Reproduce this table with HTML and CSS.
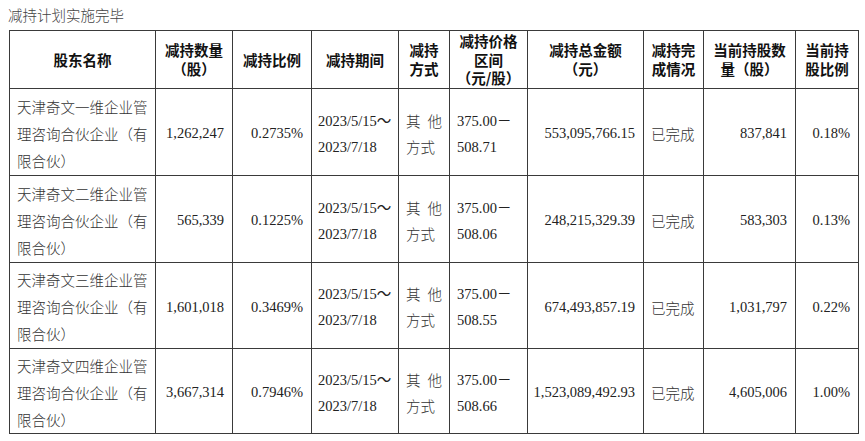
FILE: index.html
```html
<!DOCTYPE html>
<html lang="zh-CN">
<head>
<meta charset="utf-8">
<link rel="stylesheet" href="styles.css">
</head>
<body>
<div class="title">减持计划实施完毕</div>
<table class="grid">
  <colgroup>
    <col class="c1"><col class="c2"><col class="c3"><col class="c4"><col class="c5">
    <col class="c6"><col class="c7"><col class="c8"><col class="c9"><col class="c10">
  </colgroup>
  <thead>
    <tr class="head">
      <th>股东名称</th>
      <th>减持数量<br>（股）</th>
      <th>减持比例</th>
      <th>减持期间</th>
      <th>减持<br>方式</th>
      <th>减持价格<br>区间<br>（元/股）</th>
      <th>减持总金额<br>（元）</th>
      <th>减持完<br>成情况</th>
      <th>当前持股数<br>量（股）</th>
      <th>当前持<br>股比例</th>
    </tr>
  </thead>
  <tbody>
    <tr class="row">
      <td class="name">天津奇文一维企业管<br>理咨询合伙企业（有<br>限合伙）</td>
      <td class="num">1,262,247</td>
      <td class="num">0.2735%</td>
      <td class="date">2023/5/15～<br>2023/7/18</td>
      <td class="way"><span class="just"><span>其</span><span>他</span></span>方式</td>
      <td class="price">375.00－<br>508.71</td>
      <td class="num amt">553,095,766.15</td>
      <td class="state">已完成</td>
      <td class="num">837,841</td>
      <td class="num">0.18%</td>
    </tr>
    <tr class="row">
      <td class="name">天津奇文二维企业管<br>理咨询合伙企业（有<br>限合伙）</td>
      <td class="num">565,339</td>
      <td class="num">0.1225%</td>
      <td class="date">2023/5/15～<br>2023/7/18</td>
      <td class="way"><span class="just"><span>其</span><span>他</span></span>方式</td>
      <td class="price">375.00－<br>508.06</td>
      <td class="num amt">248,215,329.39</td>
      <td class="state">已完成</td>
      <td class="num">583,303</td>
      <td class="num">0.13%</td>
    </tr>
    <tr class="row r3">
      <td class="name">天津奇文三维企业管<br>理咨询合伙企业（有<br>限合伙）</td>
      <td class="num">1,601,018</td>
      <td class="num">0.3469%</td>
      <td class="date">2023/5/15～<br>2023/7/18</td>
      <td class="way"><span class="just"><span>其</span><span>他</span></span>方式</td>
      <td class="price">375.00－<br>508.55</td>
      <td class="num amt">674,493,857.19</td>
      <td class="state">已完成</td>
      <td class="num">1,031,797</td>
      <td class="num">0.22%</td>
    </tr>
    <tr class="row r4">
      <td class="name">天津奇文四维企业管<br>理咨询合伙企业（有<br>限合伙）</td>
      <td class="num">3,667,314</td>
      <td class="num">0.7946%</td>
      <td class="date">2023/5/15～<br>2023/7/18</td>
      <td class="way"><span class="just"><span>其</span><span>他</span></span>方式</td>
      <td class="price">375.00－<br>508.66</td>
      <td class="num amt">1,523,089,492.93</td>
      <td class="state">已完成</td>
      <td class="num">4,605,006</td>
      <td class="num">1.00%</td>
    </tr>
  </tbody>
</table>
</body>
</html>
```

FILE: styles.css
```css
html, body {
  margin: 0;
  padding: 0;
  background: #ffffff;
}
body {
  font-family: "Liberation Serif", "Noto Sans CJK SC", serif;
  color: #222;
}
.title {
  height: 30px;
  line-height: 29px;
  padding-left: 8px;
  font-family: "Noto Sans CJK SC", sans-serif;
  font-weight: 300;
  font-size: 14.5px;
  color: #444;
}
.grid {
  margin-left: 9px;
  border-collapse: collapse;
  table-layout: fixed;
  width: 849px;
}
.c1 { width: 146px; }
.c2 { width: 77px; }
.c3 { width: 79px; }
.c4 { width: 87px; }
.c5 { width: 51px; }
.c6 { width: 78px; }
.c7 { width: 116px; }
.c8 { width: 60px; }
.c9 { width: 92px; }
.c10 { width: 63px; }
.grid th, .grid td {
  border: 1px solid #3a3a3a;
  padding: 0;
  vertical-align: middle;
}
.head { height: 57px; }
.grid .head th {
  font-family: "Noto Sans CJK SC", sans-serif;
  font-weight: 700;
  font-size: 14.5px;
  line-height: 18.6px;
  color: #111;
  text-align: center;
  padding-top: 1px;
}
.row { height: 87px; }
.row.r3 { height: 86px; }
.row.r4 { height: 85px; }
.grid .row td {
  font-size: 14.5px;
  padding-top: 4px;
}
.grid .row td.name {
  font-family: "Noto Sans CJK SC", sans-serif;
  font-weight: 300;
  line-height: 27px;
  padding-left: 7px;
  padding-top: 3px;
  color: #333;
  white-space: nowrap;
}
.grid .row td.num {
  text-align: right;
  padding-right: 8px;
  white-space: nowrap;
}
.grid .row td.date {
  line-height: 26px;
  padding-left: 6px;
  white-space: nowrap;
}
.grid .row td.way {
  font-family: "Noto Sans CJK SC", sans-serif;
  font-weight: 300;
  line-height: 26px;
  padding-left: 7px;
  padding-right: 7px;
  color: #333;
}
.just {
  display: flex;
  justify-content: space-between;
}
.grid .row td.price {
  line-height: 26px;
  padding-left: 7px;
  white-space: nowrap;
}
.grid .row td.state {
  font-family: "Noto Sans CJK SC", sans-serif;
  font-weight: 300;
  padding-left: 7px;
  color: #333;
}
```
